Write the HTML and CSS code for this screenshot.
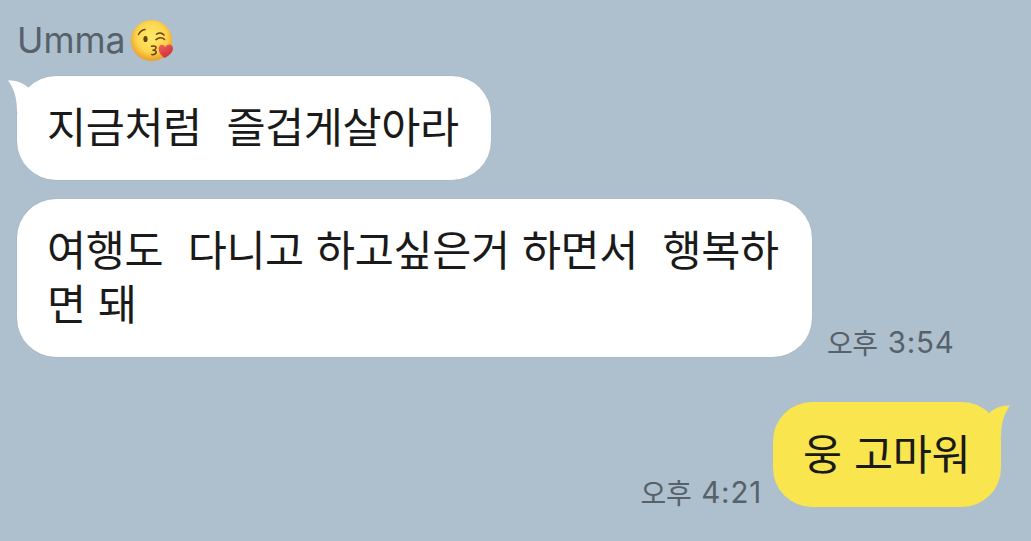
FILE: index.html
```html
<!DOCTYPE html>
<html lang="ko">
  <head>
    <meta charset="UTF-8" />
    <meta name="viewport" content="width=device-width, initial-scale=1.0" />
    <title>Umma</title>
    <link rel="stylesheet" href="styles.css">
  </head>
  <body>
    <div class="chat">
      <!-- received -->
      <div class="name">
        <span>Umma</span>
        <svg class="emoji" viewBox="0 0 44 44" role="img" aria-label="kiss">
          <defs>
            <radialGradient id="face" cx="50%" cy="42%" r="55%">
              <stop offset="0" stop-color="#ffe86c" />
              <stop offset="0.65" stop-color="#fdd650" />
              <stop offset="1" stop-color="#eba52d" />
            </radialGradient>
            <linearGradient id="heart" x1="0" y1="0" x2="0.6" y2="1">
              <stop offset="0" stop-color="#f4625c" />
              <stop offset="1" stop-color="#cf2f38" />
            </linearGradient>
          </defs>
          <circle cx="21.5" cy="21.5" r="20.6" fill="url(#face)" />
          <g fill="none" stroke="#68400f" stroke-width="1.5" stroke-linecap="round">
            <path d="M8.5 15.5C10 12.5 12 11 15 10.6" />
            <path d="M26.5 15.2C29 13.6 32 14 34 16" />
            <path d="M26 20.6C28.5 18.5 32 18.3 34.5 20.4" />
            <path d="M21.5 27.2C25 26.4 26.8 28 25.8 29.5C25.2 30.7 23.5 31.2 22.5 31.2C25.5 31 27 32.5 26 34C25.2 35.3 23.2 35.8 21.8 35.6" />
          </g>
          <ellipse cx="15.5" cy="20" rx="2.1" ry="3.1" fill="#68400f" />
          <path d="M34.5 39C31 36.5 28.6 33.5 28.6 29.5C28.8 25.5 33 24.2 35.2 28C38 23.8 42.8 25.2 43 29.2C43 33 39.5 36.5 34.5 39Z" fill="url(#heart)" />
        </svg>
      </div>
      <div class="row">
        <div class="bubble white">
          <svg class="tail" viewBox="0 0 24 36"><path d="M0 4.3C8 4.6 14 6.4 20.4 11.5L24 36H9C9 22 6 13 0 4.3Z" /></svg>
          <p class="text">지금처럼&nbsp; 즐겁게살아라</p>
        </div>
      </div>
      <div class="row second">
        <div class="bubble white">
          <p class="text">여행도&nbsp; 다니고 하고싶은거 하면서&nbsp; 행복하<br>면 돼</p>
        </div>
        <div class="time"><span class="ampm">오후</span><span>3:54</span></div>
      </div>
      <!-- sent -->
      <div class="row mine">
        <div class="time"><span class="ampm">오후</span><span>4:21</span></div>
        <div class="bubble yellow">
          <svg class="tail" viewBox="0 0 24 36"><path d="M0 4.3C8 4.6 14 6.4 20.4 11.5L24 36H9C9 22 6 13 0 4.3Z" /></svg>
          <p class="text">웅 고마워</p>
        </div>
      </div>
    </div>
  </body>
</html>
```
FILE: styles.css
```css
* {
  padding: 0;
  margin: 0;
  box-sizing: border-box;
}
body {
  background: #aebfcd;
  font-family: "Noto Sans CJK KR", sans-serif;
  color: #1a1a1a;
}
.chat {
  height: 541px;
  padding: 19px 30px 0 17px;
  overflow: hidden;
}
.name {
  display: flex;
  height: 57px;
  font-family: Inter, sans-serif;
  font-size: 35.5px;
  line-height: 44px;
  color: #56616a;
}
.emoji {
  width: 44px;
  height: 44px;
  margin-left: 4px;
}
.row {
  display: flex;
  align-items: flex-end;
}
.second {
  margin-top: 19px;
}
.mine {
  justify-content: flex-end;
  margin-top: 45px;
}
.bubble {
  position: relative;
  border-radius: 39px;
  padding: 22px 30px 26px;
}
.white {
  width: 474px;
  height: 104px;
  background: #fff;
  box-shadow: 0 0 1px rgba(60, 80, 100, 0.25);
}
.second .white {
  width: 795px;
  height: 158px;
}
.yellow {
  width: 228px;
  height: 105px;
  padding-top: 23px;
  background: #f9e54d;
}
.text {
  font-size: 42.5px;
  line-height: 54px;
  letter-spacing: -0.4px;
  word-spacing: 0.8px;
  white-space: nowrap;
}
/* little horn on the top corner */
.tail {
  position: absolute;
  top: 0;
  left: -9px;
  width: 24px;
  height: 36px;
  fill: #fff;
}
.yellow .tail {
  top: -1px;
  left: auto;
  right: -9px;
  fill: #f9e54d;
  transform: scaleX(-1);
}
.time {
  display: flex;
  gap: 10px;
  font-family: Inter, sans-serif;
  font-size: 29.5px;
  line-height: 30px;
  letter-spacing: 0.8px;
  color: #56616a;
  margin: 0 11px 0 15px;
  white-space: nowrap;
}
.ampm {
  font-family: "Noto Sans CJK KR", sans-serif;
  font-size: 28px;
  letter-spacing: -0.4px;
}
```
